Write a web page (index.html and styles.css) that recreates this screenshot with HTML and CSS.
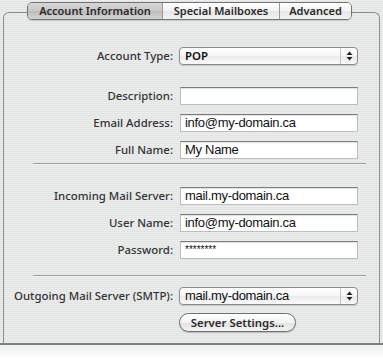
FILE: index.html
```html
<!DOCTYPE html>
<html>
<head>
    <meta charset="UTF-8">
    <title>Account Information</title>
    <link rel="stylesheet" href="styles.css">
</head>
<body>
    <div class="window">
        <div class="panel">
            <div class="tabs">
                <div class="tab selected">Account Information</div>
                <div class="tab">Special Mailboxes</div>
                <div class="tab">Advanced</div>
            </div>
            <div class="form">
                <div class="group first">
                    <div class="label">Account Type:</div>
                    <div class="popup">
                        <span class="popup-text label-text">POP</span>
                        <span class="arrows">
                            <svg width="7" height="10" viewBox="0 0 7 10"><path d="M3.5 0.5 L6.5 4 H0.5 Z M3.5 9.5 L6.5 6 H0.5 Z" fill="#222"/></svg>
                        </span>
                    </div>
                </div>
                <div class="group">
                    <div class="label">Description:</div>
                    <div class="field"></div>
                    <div class="label">Email Address:</div>
                    <div class="field">info@my-domain.ca</div>
                    <div class="label">Full Name:</div>
                    <div class="field">My Name</div>
                </div>
                <div class="sep"></div>
                <div class="group">
                    <div class="label">Incoming Mail Server:</div>
                    <div class="field">mail.my-domain.ca</div>
                    <div class="label">User Name:</div>
                    <div class="field">info@my-domain.ca</div>
                    <div class="label">Password:</div>
                    <div class="field secret">********</div>
                </div>
                <div class="sep sep-low"></div>
                <div class="group last">
                    <div class="label">Outgoing Mail Server (SMTP):</div>
                    <div class="popup">
                        <span class="popup-text">mail.my-domain.ca</span>
                        <span class="arrows">
                            <svg width="7" height="10" viewBox="0 0 7 10"><path d="M3.5 0.5 L6.5 4 H0.5 Z M3.5 9.5 L6.5 6 H0.5 Z" fill="#222"/></svg>
                        </span>
                    </div>
                    <div></div>
                    <div class="button">Server Settings...</div>
                </div>
            </div>
        </div>
    </div>
    <div class="footer"></div>
</body>
</html>
```

FILE: styles.css
```css
*{
    margin: 0;
    padding: 0;
    box-sizing: border-box;
}
html,body{
    width: 100%;
    height: 100%;
}
body{
    background-color: #ffffff;
    font-family: "Noto Sans", "DejaVu Sans", sans-serif;
    font-size: 11.4px;
    color: #222222;
    overflow: hidden;
}
.window{
    height: 345px;
    padding: 12px 3px 0 3px;
    background: repeating-linear-gradient(#ebecec 0, #ebecec 1px, #e3e4e4 1px, #e3e4e4 2px);
    border-bottom: 2px solid #7e7f7f;
}
.panel{
    height: 331px;
    border: 1px solid #8e8e8e;
    border-bottom: 0;
    border-radius: 6px 6px 0 0;
}
.tabs{
    display: flex;
    width: 325px;
    height: 18px;
    margin: -11px 0 0 23px;
    border: 1px solid #737373;
    border-radius: 5px;
    overflow: hidden;
    box-shadow: 0 1px 1px rgba(0,0,0,0.15);
}
.tab{
    font-weight: 600;
    font-size: 11px;
    line-height: 16px;
    text-align: center;
    color: #2a2a2a;
    background: linear-gradient(#ffffff, #f3f3f3 50%, #e6e6e6 51%, #f1f1f1);
    border-left: 1px solid #9a9a9a;
}
.tab:nth-child(1){
    width: 134px;
    border-left: 0;
}
.tab:nth-child(2){
    width: 117px;
}
.tab:nth-child(3){
    flex: 1;
}
.tab.selected{
    background: linear-gradient(#d6d6d6, #c9c9c9 50%, #bcbcbc 51%, #d2d2d2);
}
.form{
    padding-top: 27px;
}
.group{
    display: grid;
    grid-template-columns: 169px 178px;
    column-gap: 7px;
    row-gap: 9px;
    align-items: center;
}
.first{
    margin-bottom: 22px;
}
.label{
    text-align: right;
    line-height: 18px;
    color: #333333;
    font-weight: 500;
}
.field{
    height: 18px;
    background-color: #ffffff;
    border: 1px solid #bdbdbd;
    border-top-color: #7b7b7b;
    box-shadow: inset 0 1px 1px rgba(0,0,0,0.12);
    font-family: "Liberation Sans", Arial, sans-serif;
    font-size: 13px;
    letter-spacing: -0.3px;
    line-height: 16px;
    padding-left: 4px;
    color: #111111;
}
.secret{
    font-size: 10px;
    letter-spacing: 0;
}
.popup{
    display: flex;
    align-items: center;
    height: 18px;
    margin-left: -1px;
    border: 1px solid #8a8a8a;
    border-radius: 4px;
    background: linear-gradient(#ffffff, #f6f6f6 50%, #eaeaea 51%, #fafafa);
    box-shadow: 0 1px 1px rgba(0,0,0,0.15);
}
.popup-text{
    flex: 1;
    padding-left: 5px;
    font-family: "Liberation Sans", Arial, sans-serif;
    font-size: 13px;
    letter-spacing: -0.3px;
    line-height: 16px;
    color: #111111;
}
.label-text{
    font-family: "Noto Sans", "DejaVu Sans", sans-serif;
    font-size: 11.4px;
    letter-spacing: 0;
    font-weight: 600;
}
.arrows{
    display: flex;
    align-items: center;
    justify-content: center;
    width: 17px;
    height: 16px;
    border-left: 1px solid #c4c4c4;
}
.sep{
    height: 2px;
    margin: 4px 13px 22px 29px;
    border-top: 1px solid #9d9d9d;
    border-bottom: 1px solid #f5f5f5;
}
.sep-low{
    margin-top: 16px;
    margin-bottom: 10px;
}
.last{
    row-gap: 8px;
}
.button{
    width: 117px;
    height: 19px;
    margin-left: -1px;
    border: 1px solid #6f6f6f;
    border-radius: 10px;
    background: linear-gradient(#ffffff, #f3f3f3 50%, #e1e1e1 51%, #f4f4f4);
    box-shadow: 0 1px 1px rgba(0,0,0,0.2);
    text-align: center;
    font-weight: 600;
    line-height: 17px;
    color: #2a2a2a;
}
.footer{
    height: 14px;
    background: linear-gradient(#eeeeee, #ffffff);
}
```
